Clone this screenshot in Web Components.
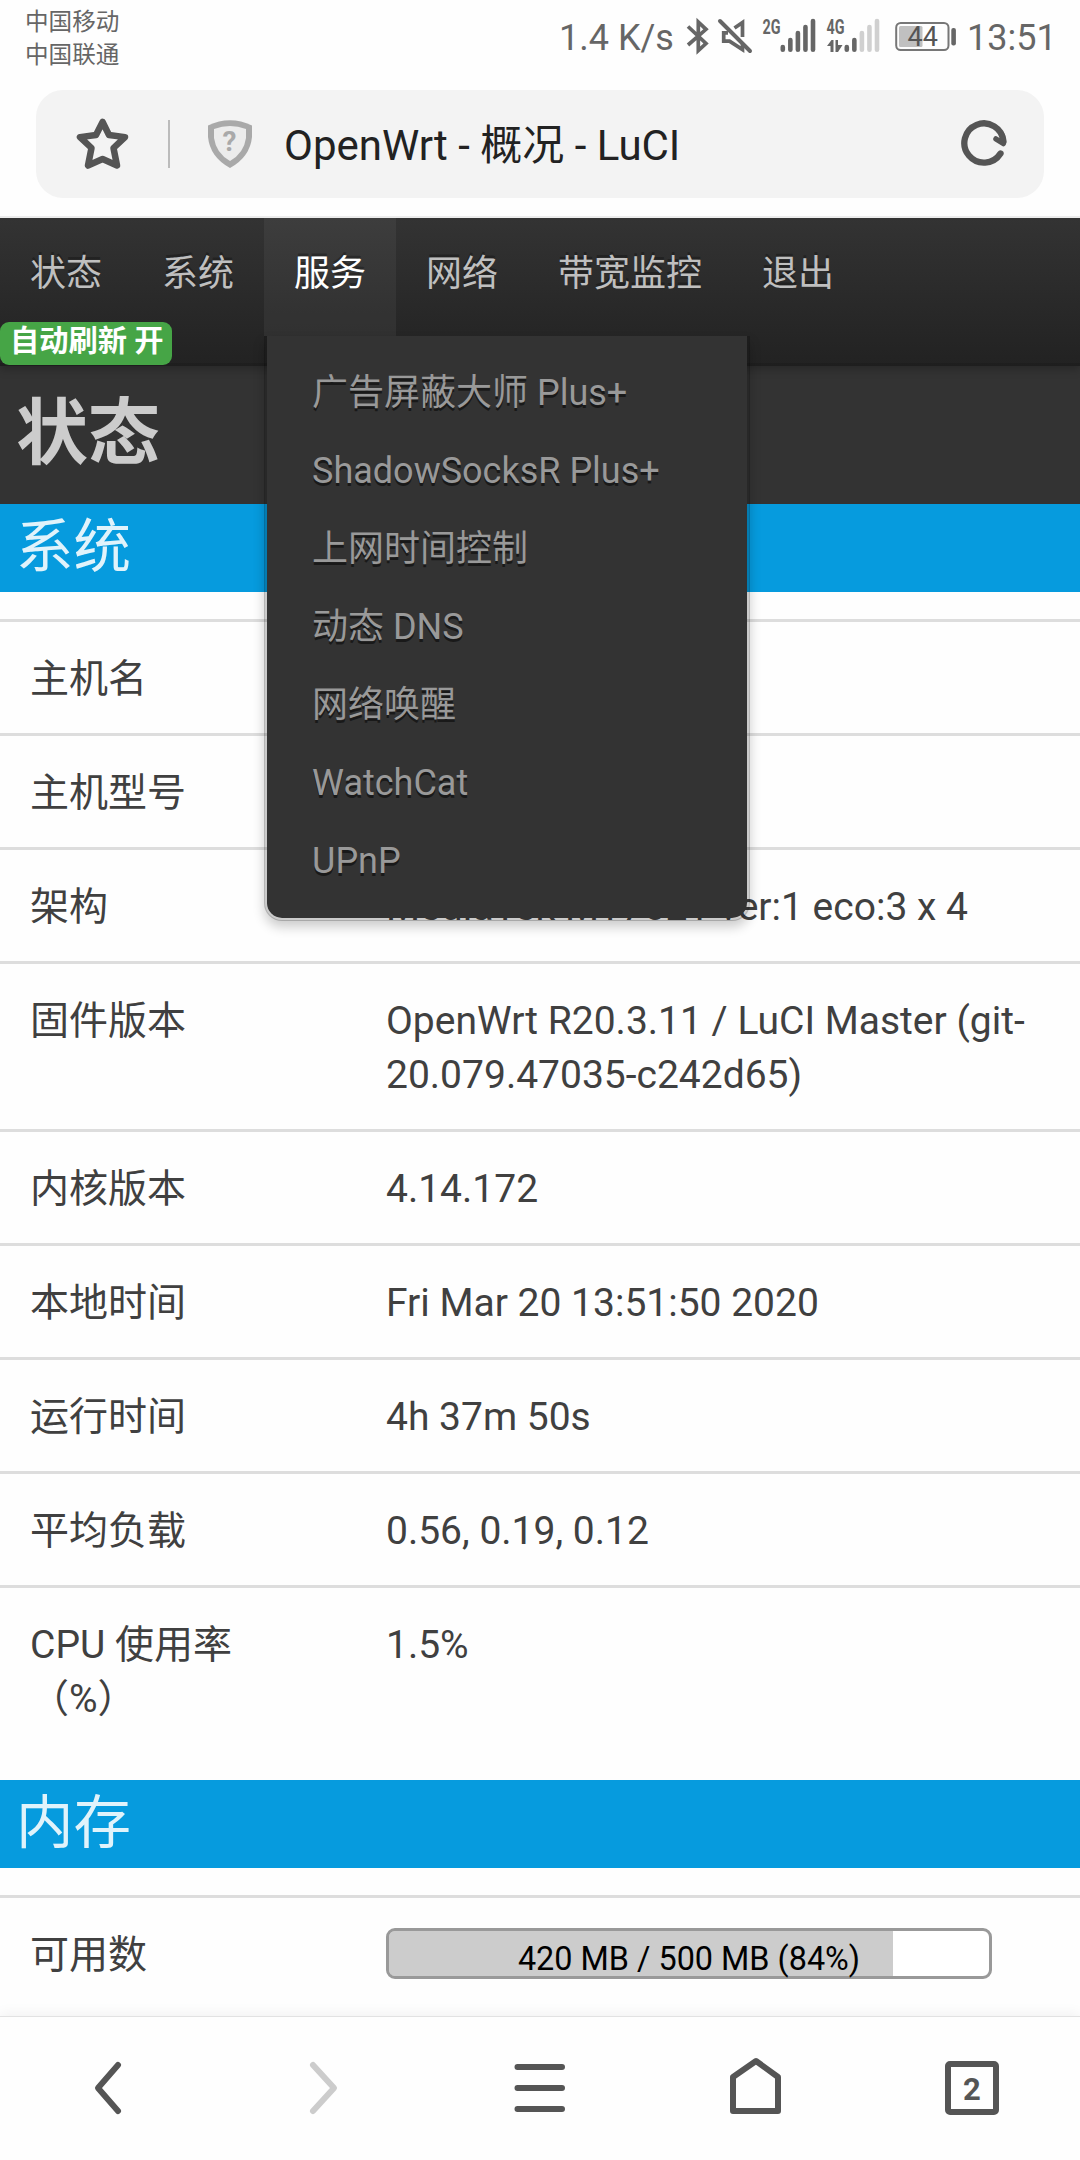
<!DOCTYPE html>
<html lang="zh-CN">
<head>
<meta charset="utf-8">
<title>OpenWrt - 概况 - LuCI</title>
<style>
	body {
		margin: 0;
		width: 1080px;
		height: 2160px;
		overflow: hidden;
		display: flex;
		flex-direction: column;
		background: #fefefe;
		color: #404040;
		font-family: Roboto, "Noto Sans CJK SC", sans-serif;
	}

	main {
		flex: 1;
		min-height: 0;
		overflow: hidden;
	}
</style>
</head>
<body>
	<status-bar></status-bar>
	<address-bar>OpenWrt - 概况 - LuCI</address-bar>
	<main>
		<luci-nav>
			<nav-item>状态</nav-item>
			<nav-item>系统</nav-item>
			<nav-item active>服务
				<drop-menu slot="menu">
					<menu-entry>广告屏蔽大师 Plus+</menu-entry>
					<menu-entry>ShadowSocksR Plus+</menu-entry>
					<menu-entry>上网时间控制</menu-entry>
					<menu-entry>动态 DNS</menu-entry>
					<menu-entry>网络唤醒</menu-entry>
					<menu-entry>WatchCat</menu-entry>
					<menu-entry>UPnP</menu-entry>
				</drop-menu>
			</nav-item>
			<nav-item>网络</nav-item>
			<nav-item>带宽监控</nav-item>
			<nav-item>退出</nav-item>
			<refresh-badge slot="badge">自动刷新 开</refresh-badge>
		</luci-nav>
		<page-title>状态</page-title>
		<info-section heading="系统">
			<info-row label="主机名"></info-row>
			<info-row label="主机型号"></info-row>
			<info-row label="架构">MediaTek MT7621 ver:1 eco:3 x 4</info-row>
			<info-row label="固件版本">OpenWrt R20.3.11 / LuCI Master (git-20.079.47035-c242d65)</info-row>
			<info-row label="内核版本">4.14.172</info-row>
			<info-row label="本地时间">Fri Mar 20 13:51:50 2020</info-row>
			<info-row label="运行时间">4h 37m 50s</info-row>
			<info-row label="平均负载">0.56, 0.19, 0.12</info-row>
			<info-row label="CPU 使用率（%）">1.5%</info-row>
		</info-section>
		<info-section heading="内存">
			<info-row label="可用数"><usage-bar percent="84">420 MB / 500 MB (84%)</usage-bar></info-row>
		</info-section>
	</main>
	<browser-toolbar tabs="2"></browser-toolbar>

<script>
// registers an element whose shadow root is filled by render(el)
const define = (name, render) => {
	customElements.define(name, class extends HTMLElement {
		connectedCallback() {
			if (this.shadowRoot) return
			this.attachShadow({mode: "open"}).innerHTML = render(this)
		}
	})
}

define("signal-bars", el => {
	const level = Number(el.getAttribute("level"))
	const bars = [45, 38, 31, 25, 19].map((top, i) =>
		`<line x1="${20.8 + i * 7.55}" y1="${top + 2}" x2="${20.8 + i * 7.55}" y2="49.7"
			stroke="${i < level ? "#666" : "#d0d0d0"}"/>`).join("")
	const arrows = el.hasAttribute("data-active")
		? `<path d="M1 46L5.5 40H7.5V52H4.5V46ZM9.5 40H12V45H16.5L12 52H9.5Z" fill="#666"/>` : ""
	return `
		<style>
			:host { display: block; height: 72px; }
			svg { display: block; overflow: visible; }
			text { font: bold 20px Roboto, sans-serif; fill: #666; }
			line { stroke-width: 4.6; stroke-linecap: round; }
		</style>
		<svg width="54" height="72">
			<text x="0.5" y="33.5" textLength="18" lengthAdjust="spacingAndGlyphs">${el.getAttribute("gen")}</text>
			${arrows}${bars}
		</svg>`
})

define("battery-level", el => `
	<style>
		:host { display: block; height: 72px; }
		svg { display: block; }
		text { font: 27px Roboto, sans-serif; fill: #555; }
	</style>
	<svg width="64" height="72">
		<rect x="3.2" y="23" width="52.3" height="27" rx="4.5" fill="none" stroke="#777" stroke-width="2"/>
		<rect x="6" y="26" width="23.5" height="21" rx="1.5" fill="#c0c0c0"/>
		<rect x="58.3" y="28" width="4.6" height="17.5" rx="2" fill="#666"/>
		<text x="14.5" y="46.3">${el.textContent}</text>
	</svg>`)

define("status-bar", () => `
	<style>
		:host {
			display: flex;
			justify-content: space-between;
			height: 90px;
			box-sizing: border-box;
			padding: 0 22px 0 25px;
			color: #666;
		}
		.carriers { padding-top: 6px; font-size: 23.6px; line-height: 33px; }
		.right {
			display: grid;
			grid-template-columns: 127px 30px 46px 64px 67px 74px 91px;
			height: 72px;
		}
		.txt { font-size: 36px; line-height: 76px; white-space: nowrap; }
		svg { display: block; fill: none; stroke: #666; stroke-width: 4; }
	</style>
	<div class="carriers">
		<div>中国移动</div>
		<div>中国联通</div>
	</div>
	<div class="right">
		<span class="txt">1.4 K/s</span>
		<svg width="24" height="72"><path d="M2 26.5L20 43.5L12.3 50.5V22L20 29.3L2 45" stroke-width="3.7"/></svg>
		<svg width="38" height="72">
			<path d="M4 21L34 51" stroke-linecap="round"/>
			<path d="M12 32.8H7.7V41.2H13.5L26.5 49.5V44" stroke-width="3.7"/>
			<path d="M18.5 28L26.5 22.5V37" stroke-width="3.7"/>
		</svg>
		<signal-bars gen="2G" level="5"></signal-bars>
		<signal-bars gen="4G" level="2" data-active></signal-bars>
		<battery-level>44</battery-level>
		<span class="txt">13:51</span>
	</div>`)

define("address-bar", () => `
	<style>
		:host { display: block; height: 128px; box-sizing: border-box; padding: 0 36px; border-bottom: 2px solid #ececec; }
		.box {
			display: flex;
			align-items: center;
			height: 108px;
			border-radius: 27px;
			background: #f3f3f3;
		}
		.star { margin-left: 39px; }
		.sep { width: 2px; height: 48px; margin: 0 38px 0 37px; background: #bbb; }
		.title { flex: 1; margin: 3px 0 0 32px; color: #222; font-size: 42px; line-height: 60px; white-space: nowrap; }
		.reload { margin-right: 34px; }
		svg { display: block; flex: none; }
		text { font: bold 28px Roboto, sans-serif; fill: #a9a9a9; }
	</style>
	<div class="box">
		<svg class="star" width="56" height="60"><path d="M27.6 8L34 21L50 23.1L38.5 34L42 51.5L27.6 45L13 51.5L16.5 34L5 23.1L21 21Z"
			fill="none" stroke="#555" stroke-width="6.5" stroke-linejoin="round"/></svg>
		<div class="sep"></div>
		<svg width="44" height="48">
			<path d="M0 5.5Q22 -5 44 5.5V17Q42 37 22 48Q2 37 0 17Z" fill="#a9a9a9"/>
			<path d="M6 9Q22 3 38 9V18Q36 33 22 41Q8 33 6 18Z" fill="#ececec"/>
			<text x="21.5" y="31" text-anchor="middle">?</text>
		</svg>
		<div class="title"><slot></slot></div>
		<svg class="reload" width="52" height="52" fill="none" stroke="#555" stroke-width="6.3" stroke-linecap="round" stroke-linejoin="round">
			<path d="M42.5 35.5A19.6 19.6 0 1 1 45.5 23.5"/>
			<path d="M38 21L45.3 25.5L44 17" stroke-width="5.5"/>
		</svg>
	</div>`)

define("luci-nav", () => `
	<style>
		:host {
			display: block;
			position: relative;
			z-index: 2;
			height: 148px;
			background: linear-gradient(#333, #222);
			box-shadow: 0 3px 9px rgba(0, 0, 0, .25), inset 0 -3px 0 rgba(0, 0, 0, .1);
		}
		.items { display: flex; }
		/* the badge hangs over the lower edge of the bar */
		.badge { position: absolute; left: 0; bottom: 1px; }
	</style>
	<div class="items"><slot></slot></div>
	<div class="badge"><slot name="badge"></slot></div>`)

define("nav-item", () => `
	<style>
		:host {
			display: block;
			position: relative;
			height: 118px;
			box-sizing: border-box;
			padding: 0 30px;
			color: #bfbfbf;
			font-size: 36px;
			line-height: 112px;
			white-space: nowrap;
			text-shadow: 0 -3px 0 rgba(0, 0, 0, .25);
		}
		:host([active]) { color: #fff; background: rgba(255, 255, 255, .05); }
		.menu { position: absolute; top: 118px; left: 0; }
	</style>
	<slot></slot>
	<div class="menu"><slot name="menu"></slot></div>`)

define("drop-menu", () => `
	<style>
		:host {
			display: block;
			width: 480px;
			padding: 18px 0;
			background: #333;
			background-clip: padding-box;
			border: solid rgba(0, 0, 0, .2);
			border-width: 0 3px 3px;
			border-radius: 0 0 18px 18px;
			box-shadow: 0 6px 12px rgba(0, 0, 0, .2);
		}
	</style>
	<slot></slot>`)

define("menu-entry", () => `
	<style>
		:host {
			display: block;
			padding-left: 45px;
			color: #999;
			font-size: 36px;
			line-height: 78px;
			text-shadow: 0 3px 0 rgba(0, 0, 0, .5);
		}
	</style>
	<slot></slot>`)

define("refresh-badge", () => `
	<style>
		:host {
			display: block;
			width: 172px;
			height: 43px;
			box-sizing: border-box;
			padding-left: 10px;
			border-radius: 9px;
			background: #46a546;
			color: #fff;
			font-size: 29.25px;
			font-weight: bold;
			line-height: 38px;
			white-space: nowrap;
		}
	</style>
	<slot></slot>`)

define("page-title", () => `
	<style>
		:host {
			display: block;
			height: 138px;
			padding-left: 16px;
			background: #333;
			color: #ccc;
			font-size: 72px;
			font-weight: bold;
			line-height: 136px;
		}
	</style>
	<slot></slot>`)

define("info-section", el => `
	<style>
		:host { display: block; margin-bottom: 27px; }
		h3 {
			margin: 0 0 27px;
			padding-left: 16px;
			height: 88px;
			background: #069bde;
			color: rgba(255, 255, 255, .88);
			font-size: 57.5px;
			font-weight: normal;
			line-height: 87px;
		}
	</style>
	<h3>${el.getAttribute("heading")}</h3>
	<slot></slot>`)

define("info-row", el => `
	<style>
		:host {
			display: grid;
			grid-template-columns: 260px 1fr;
			column-gap: 96px;
			padding: 30px 24px 27px 30px;
			border-top: 3px solid #ddd;
			font-size: 39px;
			line-height: 54px;
			min-height: 54px;
		}
	</style>
	<div>${el.getAttribute("label")}</div>
	<div><slot></slot></div>`)

define("usage-bar", el => `
	<style>
		:host {
			display: block;
			width: 606px;
			height: 51px;
			box-sizing: border-box;
			border: 3px solid #999;
			border-radius: 9px;
			color: #000;
			font-size: 32.4px;
			line-height: 56px;
			text-align: center;
			background: linear-gradient(#ccc, #ccc) 0 0 / ${el.getAttribute("percent")}% 100% no-repeat #fff;
			background-origin: padding-box;
			background-clip: padding-box;
		}
	</style>
	<slot></slot>`)

define("browser-toolbar", el => `
	<style>
		:host {
			display: grid;
			grid-template-columns: repeat(5, 1fr);
			justify-items: center;
			position: relative;
			height: 144px;
			box-sizing: border-box;
			padding-top: 40px;
			border-top: 1px solid #e2e2e2;
			background: #fefefe;
			box-shadow: 0 -3px 12px rgba(0, 0, 0, .05);
		}
		svg { display: block; fill: none; stroke: #555; stroke-width: 6; stroke-linecap: round; stroke-linejoin: round; }
		.off { stroke: #ccc; }
		.tabs {
			width: 54px;
			height: 54px;
			margin-top: 4px;
			box-sizing: border-box;
			border: 6px solid #555;
			border-radius: 5px;
			color: #555;
			font-size: 31px;
			font-weight: bold;
			line-height: 45px;
			text-align: center;
		}
	</style>
	<svg width="54" height="60"><path d="M37 8L17 31L37 54"/></svg>
	<svg class="off" width="54" height="60"><path d="M16 8L37 31L16 54"/></svg>
	<svg width="54" height="60"><path d="M4.5 10H49M4.5 31H49M4.5 52H49"/></svg>
	<svg width="54" height="60"><path d="M4 20L27 4L49 20V54H4Z"/></svg>
	<div class="tabs">${el.getAttribute("tabs")}</div>`)
</script>
</body>
</html>
